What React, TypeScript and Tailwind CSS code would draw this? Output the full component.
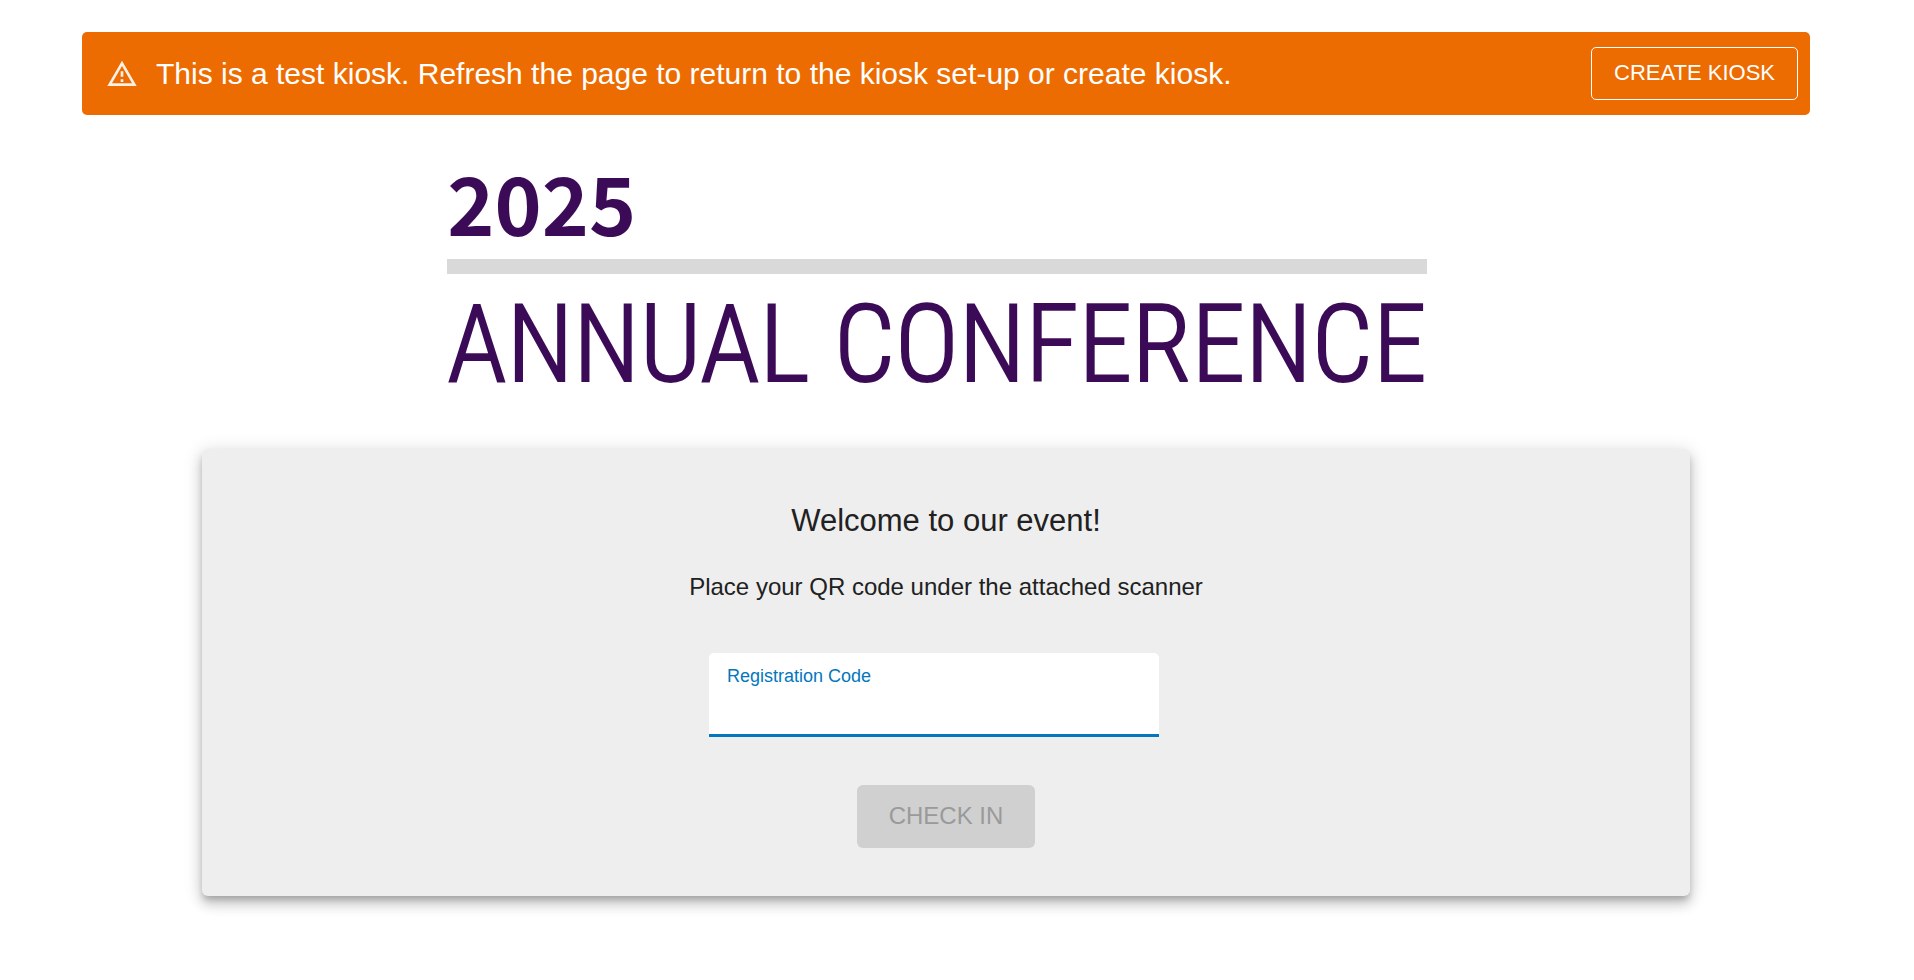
import { useState } from 'react'

/** Warning triangle shown at the start of the test banner */
function WarningIcon() {
  return (
    <svg viewBox="0 0 24 24" className="size-8 shrink-0 opacity-90" fill="currentColor" aria-hidden="true">
      <path d="M12 5.99 19.53 19H4.47L12 5.99M12 2 1 21h22L12 2Zm1 14h-2v2h2v-2Zm0-6h-2v4h2v-4Z" />
    </svg>
  )
}

/** Banner reminding the organiser that the kiosk is only being previewed */
function TestBanner() {
  return (
    <div className="flex items-center rounded-[5px] bg-[#ed6c02] py-[15px] pr-3 pl-6 text-white">
      <WarningIcon />
      <p className="ml-[18px] flex-1 text-[30px] leading-[42px]">
        This is a test kiosk. Refresh the page to return to the kiosk set-up or create kiosk.
      </p>
      <button
        type="button"
        className="rounded-[5px] border border-white px-[22px] pt-[7px] pb-[9px] text-[22px] leading-[35px] uppercase"
      >
        Create kiosk
      </button>
    </div>
  )
}

/** Event name lockup */
function EventLogo() {
  return (
    <h1 className="mx-auto w-fit text-[#3c0b57]">
      <span className='mb-3 block font-["Noto_Sans_CJK_SC",sans-serif] text-[80px] leading-[92px] font-bold'>2025</span>
      <span className="block h-[15px] bg-[#d9d9d9]" />
      {/* The light cut is a little too thin at this size, so it gets an outline */}
      <span className='mt-[14px] block font-["Roboto_Condensed",sans-serif] text-[108px] leading-[113px] font-light [-webkit-text-stroke:2px_#3c0b57]'>
        ANNUAL CONFERENCE
      </span>
    </h1>
  )
}

/** Card where an attendee scans or types the registration code */
function CheckInCard() {
  const [code, setCode] = useState('')

  return (
    <form
      onSubmit={(e) => e.preventDefault()}
      className="mx-[120px] flex flex-col items-center rounded-md bg-[#eeeeee] px-6 py-12 text-[#212121] shadow-[0_5px_6px_-2px_rgba(0,0,0,0.2),0_8px_12px_1px_rgba(0,0,0,0.14),0_3px_18px_2px_rgba(0,0,0,0.12)]"
    >
      <h2 className="text-[31px] leading-[48px]">Welcome to our event!</h2>
      <p className="mt-6 text-2xl leading-9">Place your QR code under the attached scanner</p>
      <div className="mt-12 mr-6 flex w-[450px] max-w-full flex-col rounded-t-[5px] border-b-3 border-[#0277bd] bg-white px-[18px] pt-[11px]">
        <label htmlFor="registration-code" className="text-lg leading-6 text-[#0277bd]">
          Registration Code
        </label>
        <input
          id="registration-code"
          type="text"
          value={code}
          onChange={(e) => setCode(e.target.value)}
          className="h-[46px] w-full text-2xl outline-none"
        />
      </div>
      <button
        type="submit"
        disabled={code === ''}
        className="mt-12 rounded-md bg-[#0277bd] px-8 pt-[11px] pb-[13px] text-2xl leading-[39px] text-white uppercase disabled:bg-[#d0d0d0] disabled:text-[#9a9a9a]"
      >
        Check in
      </button>
    </form>
  )
}

export default function App() {
  return (
    <main className='bg-white pt-8 pr-[104px] pb-12 pl-[82px] font-["Liberation_Sans",Arial,sans-serif]'>
      <TestBanner />
      <div className="mt-10 mr-[18px] mb-12">
        <EventLogo />
      </div>
      <CheckInCard />
    </main>
  )
}
